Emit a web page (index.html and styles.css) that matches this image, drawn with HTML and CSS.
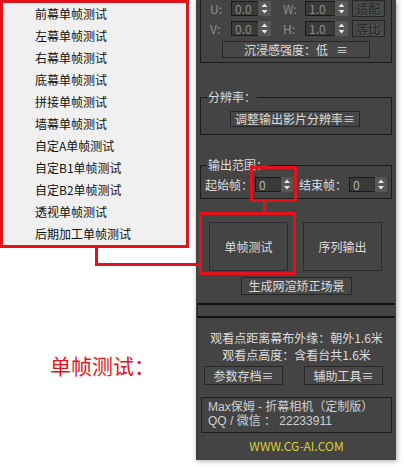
FILE: index.html
```html
<!DOCTYPE html>
<html lang="zh-CN">
<head>
    <meta charset="UTF-8">
    <meta name="viewport" content="width=device-width, initial-scale=1.0">
    <title>单帧测试</title>
    <link rel="stylesheet" href="styles.css">
</head>
<body>
<div class="page">

    <!-- left side: the drop-down menu and the caption -->
    <div class="left">
        <ul class="menu">
            <li>前幕单帧测试</li>
            <li>左幕单帧测试</li>
            <li>右幕单帧测试</li>
            <li>底幕单帧测试</li>
            <li>拼接单帧测试</li>
            <li>墙幕单帧测试</li>
            <li>自定A单帧测试</li>
            <li>自定B1单帧测试</li>
            <li>自定B2单帧测试</li>
            <li>透视单帧测试</li>
            <li>后期加工单帧测试</li>
        </ul>
        <p class="caption">单帧测试：</p>
    </div>

    <!-- right side: the 3ds Max rollout -->
    <div class="panel">
        <div class="group group-top">
            <div class="row">
                <span class="lbl lbl-uv dim">U:</span>
                <span class="spin"><span class="field f27 dimval">0.0</span><svg class="arrows" width="13" height="15" viewBox="0 0 13 15"><rect width="13" height="15" fill="#575757"/><path d="M6.5 2.5 L9.5 6 L3.5 6 Z M3.5 9 L9.5 9 L6.5 12.5 Z" fill="#e6e6e6"/></svg></span>
                <span class="lbl lbl-wh dim">W:</span>
                <span class="spin"><span class="field f30 dimval">1.0</span><svg class="arrows" width="13" height="15" viewBox="0 0 13 15"><rect width="13" height="15" fill="#575757"/><path d="M6.5 2.5 L9.5 6 L3.5 6 Z M3.5 9 L9.5 9 L6.5 12.5 Z" fill="#e6e6e6"/></svg></span>
                <button class="btn btn-small">适配</button>
            </div>
            <div class="row">
                <span class="lbl lbl-uv dim">V:</span>
                <span class="spin"><span class="field f27 dimval">0.0</span><svg class="arrows" width="13" height="15" viewBox="0 0 13 15"><rect width="13" height="15" fill="#575757"/><path d="M6.5 2.5 L9.5 6 L3.5 6 Z M3.5 9 L9.5 9 L6.5 12.5 Z" fill="#e6e6e6"/></svg></span>
                <span class="lbl lbl-wh dim">H:</span>
                <span class="spin"><span class="field f30 dimval">1.0</span><svg class="arrows" width="13" height="15" viewBox="0 0 13 15"><rect width="13" height="15" fill="#575757"/><path d="M6.5 2.5 L9.5 6 L3.5 6 Z M3.5 9 L9.5 9 L6.5 12.5 Z" fill="#e6e6e6"/></svg></span>
                <button class="btn btn-small">等比</button>
            </div>
            <button class="btn btn-wide">沉浸感强度：低&nbsp;&nbsp;&nbsp;≡</button>
        </div>

        <div class="group group-res">
            <span class="legend">分辨率：</span>
            <button class="btn btn-res">调整输出影片分辨率≡</button>
        </div>

        <div class="group group-range">
            <span class="legend">输出范围：</span>
            <div class="row">
                <span class="lbl lbl-frame">起始帧：</span>
                <span class="spin"><span class="field f26">0</span><svg class="arrows" width="12" height="15" viewBox="0 0 12 15"><rect width="12" height="15" fill="#575757"/><path d="M6 2.5 L9 6 L3 6 Z M3 9 L9 9 L6 12.5 Z" fill="#e6e6e6"/></svg></span>
                <span class="lbl lbl-frame lbl-end">结束帧：</span>
                <span class="spin"><span class="field f26">0</span><svg class="arrows" width="12" height="15" viewBox="0 0 12 15"><rect width="12" height="15" fill="#575757"/><path d="M6 2.5 L9 6 L3 6 Z M3 9 L9 9 L6 12.5 Z" fill="#e6e6e6"/></svg></span>
            </div>
        </div>

        <div class="big-row">
            <button class="btn btn-big">单帧测试</button>
            <button class="btn btn-big">序列输出</button>
        </div>
        <button class="btn btn-gen">生成网渲矫正场景</button>

        <div class="rollout-bar"></div>
        <div class="rollout">
            <p class="info">观看点距离幕布外缘：朝外1.6米</p>
            <p class="info">观看点高度：含看台共1.6米</p>
            <div class="pair">
                <button class="btn btn-half">参数存档≡</button>
                <button class="btn btn-half">辅助工具≡</button>
            </div>
            <div class="about">
                <div class="about-line">Max保姆 - 折幕相机（定制版）</div>
                <div class="about-line">QQ / 微信 ： 22233911</div>
            </div>
            <div class="site">WWW.CG-AI.COM</div>
        </div>
    </div>

    <!-- red markers drawn over the picture -->
    <div class="mark mark-menu-v"></div>
    <div class="mark mark-menu-h"></div>
    <div class="mark-box mark-big"></div>
    <div class="mark-box mark-spin"></div>
    <div class="mark mark-spin-v"></div>
</div>
</body>
</html>
```

FILE: styles.css
```css
* {
    box-sizing: border-box;
}
body {
    margin: 0;
    background: #fff;
}
.page {
    position: relative;
    display: flex;
    width: 404px;
    height: 467px;
    overflow: hidden;
    background: #fff;
}

/* left: menu */
.left {
    width: 196px;
    flex: none;
}
.menu {
    list-style: none;
    margin: 0;
    padding: 0;
    width: 189px;
    height: 248px;
    border: 3px solid #e3121b;
    background: #f0f0f0;
}
.menu li {
    height: 22px;
    line-height: 22px;
    padding-left: 32px;
    font-family: "Noto Sans CJK SC", sans-serif;
    font-size: 12px;
    color: #111;
}
.caption {
    margin: 108px 0 0 50px;
    font-family: "Liberation Serif", "Noto Sans CJK SC", serif;
    font-size: 21px;
    line-height: 22px;
    color: #e3121b;
}

/* right: dark panel */
.panel {
    width: 200px;
    height: 460px;
    flex: none;
    padding: 0 4px;
    background: #444;
    box-shadow: 1px 1px 5px rgba(0, 0, 0, 0.35);
    font-family: "Noto Sans CJK SC", sans-serif;
    font-size: 12px;
    line-height: 14px;
    color: #dcdcdc;
}
.group {
    position: relative;
    width: 192px;
    border: 1px solid #1c1c1c;
}
.legend {
    position: absolute;
    top: -8px;
    left: 6px;
    padding: 0 1px;
    background: #444;
    line-height: 14px;
}
.row {
    display: flex;
    align-items: center;
    height: 17px;
}
.row + .row {
    margin-top: 3px;
}
.lbl {
    flex: none;
}
.dim {
    color: #8e8e8e;
}
.lbl-uv {
    width: 21px;
}
.lbl-wh {
    width: 22px;
    margin-left: 12px;
}
.spin {
    display: flex;
    flex: none;
    height: 15px;
}
.field {
    height: 15px;
    padding-left: 3px;
    background: #3a3a3a;
    border: 1px solid #1a1a1a;
    border-right-color: #333;
    line-height: 13px;
    color: #b4b4b4;
}
.dimval {
    color: #8a8a8a;
}
.f27 { width: 27px; }
.f30 { width: 30px; }
.f26 { width: 26px; }
.arrows {
    display: block;
}

.btn {
    display: flex;
    align-items: center;
    justify-content: center;
    flex: none;
    margin: 0;
    padding: 0;
    font: inherit;
    line-height: 14px;
    color: #dcdcdc;
    background: #474747;
    border: 1px solid #262626;
}
.btn-small {
    width: 33px;
    height: 17px;
    margin-left: 4px;
    color: #262626;
    text-shadow: 1px 1px 0 #5c5c5c;
}
.btn-wide {
    width: 148px;
    height: 17px;
    margin: 4px 0 0 12px;
}

.group-top {
    height: 63px;
    padding-left: 9px;
    border-top: none;
}
.group-res {
    height: 38px;
    margin-top: 34px;
    padding: 13px 0 0 29px;
}
.btn-res {
    width: 130px;
    height: 16px;
}
.group-range {
    height: 34px;
    margin-top: 30px;
    padding: 10px 0 0 4px;
}
.lbl-frame {
    width: 50px;
}
.lbl-end {
    margin-left: 6px;
}

.big-row {
    display: flex;
    gap: 15px;
    margin-top: 23px;
    padding-left: 9px;
}
.btn-big {
    width: 79px;
    height: 49px;
    background: #444;
    border-color: #2a2a2a;
}
.btn-gen {
    width: 111px;
    height: 18px;
    margin: 6px 0 0 41px;
}

.rollout-bar {
    width: 198px;
    height: 13px;
    margin: 8px 0 0 -3px;
    border-top: 2px solid #111;
    border-left: 1px solid #222;
}
.rollout {
    width: 198px;
    height: 144px;
    margin-left: -3px;
    padding-top: 11px;
    border-top: 2px solid #111;
    border-left: 1px solid #333;
}
.info {
    margin: 0;
    line-height: 17px;
    text-align: center;
}
.pair {
    display: flex;
    gap: 21px;
    margin-top: 3px;
    padding-left: 6px;
}
.btn-half {
    width: 79px;
    height: 19px;
}
.about {
    width: 191px;
    height: 36px;
    margin: 12px 0 0 3px;
    padding: 2px 0 0 6px;
    border: 1px solid #1e1e1e;
    font-family: "Liberation Sans", "Noto Sans CJK SC", sans-serif;
    font-size: 12px;
    color: #d0d0d0;
}
.about-line {
    height: 14px;
    line-height: 14px;
}
.site {
    margin-top: 6px;
    line-height: 14px;
    text-align: center;
    color: #d8d03a;
}

/* red annotation marks */
.mark {
    position: absolute;
    background: #e3121b;
}
.mark-box {
    position: absolute;
    border: 3px solid #e3121b;
}
.mark-menu-v {
    left: 95px;
    top: 248px;
    width: 3px;
    height: 18px;
}
.mark-menu-h {
    left: 95px;
    top: 263px;
    width: 106px;
    height: 3px;
}
.mark-big {
    left: 199px;
    top: 212px;
    width: 97px;
    height: 63px;
}
.mark-spin {
    left: 250px;
    top: 166px;
    width: 47px;
    height: 36px;
}
.mark-spin-v {
    left: 263px;
    top: 202px;
    width: 3px;
    height: 11px;
}
```
